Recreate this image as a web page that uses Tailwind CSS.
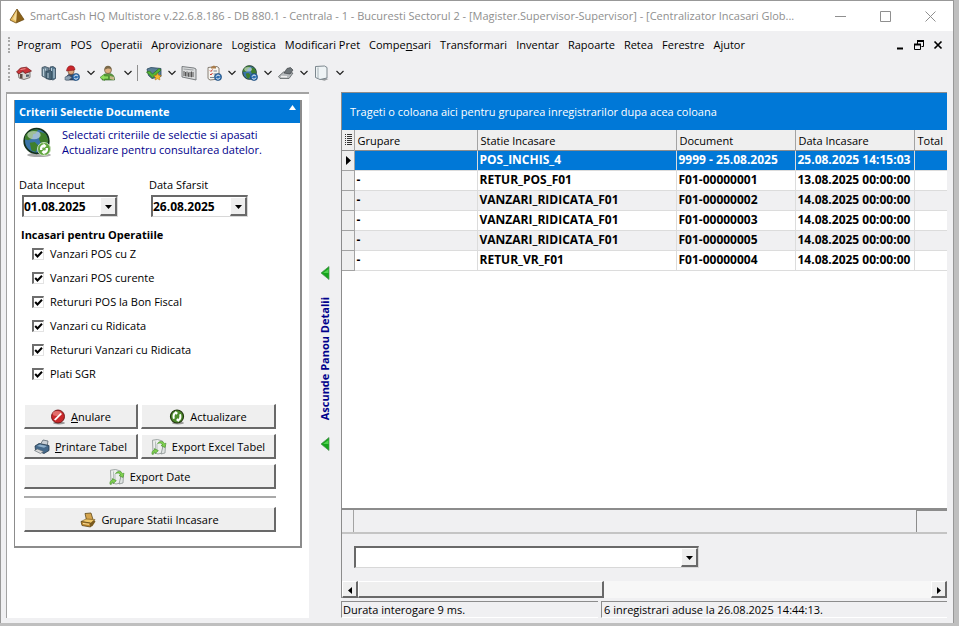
<!DOCTYPE html>
<html lang="ro">
<head>
  <meta charset="UTF-8" />
  <meta name="viewport" content="width=device-width, initial-scale=1.0"/>
  <title>SmartCash HQ Multistore</title>
  <script src="https://cdn.jsdelivr.net/npm/@tailwindcss/browser@4"></script>
  <style>
    body {
      font-family: 'Open Sans', 'Noto Sans', sans-serif;
    }
    .btn {
      display: flex;
      align-items: center;
      justify-content: center;
      gap: 5px;
      height: 25px;
      padding-top: 2px;
      background: #efefef;
      border: 1px solid #fff;
      border-right: 2px solid #696969;
      border-bottom: 2px solid #696969;
    }
    .btn:active {
      border-color: #696969 #fff #fff #696969;
    }
    .sunken {
      border: 2px solid #696969;
      border-right: 1px solid #d8d8d8;
      border-bottom: 1px solid #d8d8d8;
      background: #fff;
    }
    .check {
      appearance: none;
      width: 12px;
      height: 12px;
      border: 2px solid #6e6e6e;
      border-right: 1px solid #e3e3e3;
      border-bottom: 1px solid #e3e3e3;
      background: #fff;
    }
    .check:checked {
      background: #fff url("data:image/svg+xml,%3Csvg xmlns='http://www.w3.org/2000/svg' viewBox='0 0 9 9'%3E%3Cpath d='M1.2 4l2.3 2.5L8 1.8' fill='none' stroke='%23000' stroke-width='2'/%3E%3C/svg%3E") center / 9px 9px no-repeat;
    }
  </style>
</head>
<body class="bg-[#bfbfbf] text-black text-[11px] leading-4">

  <!-- Shared icons -->
  <svg class="hidden">
    <symbol id="chevron" viewBox="0 0 8 6"><path d="M.5 1L4 4.500 7.500 1" fill="none" stroke="#222" stroke-width="1.200"/></symbol>
    <symbol id="badge" viewBox="0 0 8 8"><circle cx="4" cy="4" r="3.6" fill="#2f6fb0" stroke="#1d4672" stroke-width=".6"/><path d="M2.2 3.6a2 2 0 0 1 3.6-.6M5.9 4.6a2 2 0 0 1-3.6.6" fill="none" stroke="#fff"/></symbol>
    <symbol id="export" viewBox="0 0 16 16">
      <path d="M1.500 1.200l5-.7 5 1.500v12L7 15l-5-1.500z" fill="#eceeee" stroke="#8b9492" stroke-width=".8"/>
      <path d="M4.500 2.500v10M6 5v8" stroke="#b7bfbd" fill="none"/>
      <path d="M12 7l2.500-.5-.5 7.500-4 1z" fill="#dfe3e2" stroke="#7f8886" stroke-width=".7"/>
      <path d="M6.500 4.500c2-3 6-2.500 7 .2l1.500-.5-1 4.300-4-2 1.500-.8c-1-1.700-2.500-2-5-1.200z" fill="#7fd04f" stroke="#3f8f25" stroke-width=".6"/>
      <path d="M1 15.300c-.5-2 .6-4 2.500-4.300L3.300 9.600l4 2-3 3-.3-1.500c-1 .2-1.800 1-1.600 2.200z" fill="#7fd04f" stroke="#3f8f25" stroke-width=".6"/>
    </symbol>
    <symbol id="globe" viewBox="0 0 16 16">
      <circle cx="8" cy="8" r="7.300" fill="#3a74a8" stroke="#14301c" stroke-width="1"/>
      <path d="M1.500 4.500C4 1.500 6.500.900 9 1.200L7.500 3.500 6 4l-.5 2.500L3 7.500 1 7zM4 9l3-.4 2 2-1.500 3.900-2.500-.8zM10 2.500l3.500 1.200 1.500 4-1.500 3.800-2.500-1.300L9.500 7z" fill="#3f7f2c"/>
      <ellipse cx="6.500" cy="4.500" rx="4" ry="2.500" fill="#fff" opacity=".5"/>
    </symbol>
    <symbol id="arrow-left" viewBox="0 0 10 14"><path d="M1 7l8-6.500v13z" fill="#16a51c" stroke="#4b8f50" stroke-width=".7"/><path d="M3 7l5.500-4v4z" fill="#4fd04f"/></symbol>
  </svg>

  <div class="min-h-screen flex flex-col pr-[5px] pb-[3px]">
    <div class="flex-1 flex flex-col min-w-0 bg-[#f0f0f2] border-t border-l border-r border-[#989898]">

      <!-- Title bar -->
      <header class="flex items-center h-[30px] bg-white text-[#8f8f8f] pl-2 pr-[17px]">
        <svg class="w-4 h-4 mr-[5px] shrink-0" viewBox="0 0 16 16"><path d="M8 1L1 12l6 3z" fill="#e8bd5f"/><path d="M8 1L7 15l8-3.500z" fill="#8c6218"/><path d="M8 1L1 12l6 3 8-3.500z" fill="none" stroke="#6d4a12" stroke-width=".8"/><path d="M7.500 3L4 11l3 2z" fill="#f6dc96"/></svg>
        <h1 class="flex-1 min-w-0 whitespace-nowrap">SmartCash HQ Multistore v.22.6.8.186 - DB 880.1 - Centrala - 1 - Bucuresti Sectorul 2 - [Magister.Supervisor-Supervisor] - [Centralizator Incasari Glob...</h1>
        <div class="flex items-center gap-[34px] shrink-0">
          <button aria-label="Minimizare"><svg class="w-[11px] h-[11px]" viewBox="0 0 11 11"><path d="M0 5.500h11" stroke="#8f8f8f"/></svg></button>
          <button aria-label="Maximizare"><svg class="w-[11px] h-[11px]" viewBox="0 0 11 11"><path d="M.5.5h10v10H.5z" fill="none" stroke="#8f8f8f"/></svg></button>
          <button aria-label="Inchidere"><svg class="w-[11px] h-[11px]" viewBox="0 0 11 11"><path d="M.5.5l10 10M10.500.5l-10 10" stroke="#8f8f8f"/></svg></button>
        </div>
      </header>

      <!-- Menu bar -->
      <nav class="flex items-center h-7 pl-[7px] pr-[10px]">
        <span class="h-4 border-l-2 border-dotted border-[#a8a8a8]"></span>
        <div class="flex-1 flex gap-[9px] pl-[7px] whitespace-nowrap">
          <a href="#">Program</a>
          <a href="#">POS</a>
          <a href="#">Operatii</a>
          <a href="#">Aprovizionare</a>
          <a href="#">Logistica</a>
          <a href="#">Modificari Pret</a>
          <a href="#">Compe<u>n</u>sari</a>
          <a href="#">Transformari</a>
          <a href="#">Inventar</a>
          <a href="#">Rapoarte</a>
          <a href="#">Retea</a>
          <a href="#">Ferestre</a>
          <a href="#">Ajutor</a>
        </div>
        <div class="flex items-center gap-[9px]">
          <button aria-label="Minimizare fereastra"><svg class="w-[10px] h-[10px]" viewBox="0 0 10 10"><path d="M2 8.500h6" stroke="#000" stroke-width="2"/></svg></button>
          <button aria-label="Restaurare fereastra"><svg class="w-[10px] h-[10px]" viewBox="0 0 10 10"><path d="M3 1.500h6.500M9.500 1v5.500H7.500M3.500 1v3M.5 4v5.500h6V4" fill="none" stroke="#000"/><path d="M3 1h7M0 4.500h7" stroke="#000" stroke-width="2"/></svg></button>
          <button aria-label="Inchidere fereastra"><svg class="w-[10px] h-[10px]" viewBox="0 0 10 10"><path d="M1.500 1.500l7 7M8.500 1.500l-7 7" stroke="#000" stroke-width="1.700"/></svg></button>
        </div>
      </nav>

      <!-- Toolbar -->
      <div class="flex items-center h-7 pl-[7px] mb-[5px]">
        <span class="h-4 border-l-2 border-dotted border-[#a8a8a8]"></span>
        <button class="ml-[6px]" aria-label="Acasa"><svg class="w-4 h-4" viewBox="0 0 16 16"><path d="M2 7l1 6 5 1.500 6-2V7z" fill="#d9d6d1" stroke="#66605a" stroke-width=".8"/><path d="M.5 7L4.500 3l6-.8L15.500 6 9 8.500 7 6 3 9z" fill="#c93236" stroke="#6c1215" stroke-width=".7"/><path d="M4.500 4.500l5-.8" stroke="#ee9a98"/><path d="M4 9h2.500v4.800L4 13z" fill="#5d4a42"/><path d="M10 9.500h3v2l-3 .6z" fill="#54606b"/></svg></button>
        <button class="ml-[9px]" aria-label="Cladiri"><svg class="w-4 h-4" viewBox="0 0 16 16"><path d="M1 2.500l3-1 4 1.500v9l-3 1-4-2z" fill="#6e8797" stroke="#3d5160" stroke-width=".8"/><path d="M9 2l3-.5 2.500 1.500v10.500L12 15l-3-1z" fill="#577990" stroke="#33485a" stroke-width=".8"/><path d="M5 6.500l4-1 2 1V14l-2 .8L5 13.500z" fill="#486477" stroke="#2d4251" stroke-width=".7"/><path d="M2.500 4v7M4.500 3.500v2M7 8v5M10.500 3v3M13 4v9" stroke="#c6d8e2" stroke-width=".9"/></svg></button>
        <button class="ml-[7px]" aria-label="Operator"><svg class="w-4 h-4" viewBox="0 0 16 16"><path d="M2 15c0-4 2-6 5-6s5 2 5 6z" fill="#35486a" stroke="#1f2f46" stroke-width=".6"/><path d="M1 12l4-1.500 3 2L5 15H1z" fill="#8fa3b5" stroke="#3d5160" stroke-width=".5"/><circle cx="7" cy="6.500" r="3" fill="#d9a47b" stroke="#5d3a23" stroke-width=".6"/><path d="M2.500 6C3 2 5 .8 7 .8c2.500 0 4 1.500 4 4.200z" fill="#c8262b" stroke="#781317" stroke-width=".5"/><use href="#badge" x="8" y="8" width="8" height="8"/></svg></button>
        <button class="ml-[7px]" aria-label="Optiuni operator"><svg class="w-2 h-[6px]"><use href="#chevron"/></svg></button>
        <button class="ml-[5px]" aria-label="Client"><svg class="w-4 h-4" viewBox="0 0 16 16"><path d="M2 15c0-4 2-6.500 6-6.500s6.500 1.500 6.500 6.500z" fill="#5d9a3f" stroke="#2a5f20" stroke-width=".6"/><circle cx="8" cy="5" r="3.500" fill="#dcae80" stroke="#5d4a33" stroke-width=".6"/><path d="M4.600 5C4.500 2 6 .8 8 .8S11.500 2 11.400 4.500C9.500 3 7 3 4.600 5z" fill="#7a6a4a"/><path d="M0 12.500L4.500 9v2h4v3h-4v1.500z" fill="#8ddc5c" stroke="#3a7f22" stroke-width=".6"/><path d="M10 11l4 1v3l-4-1z" fill="#c6b988"/></svg></button>
        <button class="ml-2" aria-label="Optiuni client"><svg class="w-2 h-[6px]"><use href="#chevron"/></svg></button>
        <span class="h-4 ml-[5px] border-l border-[#8f8f8f]"></span>
        <button class="ml-2" aria-label="Validare"><svg class="w-4 h-4" viewBox="0 0 16 16"><path d="M1 4l4-1.500 10 1v8l-9 2-3.500-3z" fill="#5a7f97" stroke="#29485f" stroke-width=".8"/><path d="M.5 7L3.500 6l3 3L13 3.500 15 5l-8.500 8z" fill="#55b53a" stroke="#2b6d1b" stroke-width=".7"/><path d="M11.500 8l1.200 2.300 2.600.3-1.800 1.800.4 2.600-2.400-1.200L9 15l.5-2.600-1.800-1.800 2.600-.3z" fill="#f7b731" stroke="#a86c0a" stroke-width=".5"/></svg></button>
        <button class="ml-[6px]" aria-label="Optiuni validare"><svg class="w-2 h-[6px]"><use href="#chevron"/></svg></button>
        <button class="ml-[5px]" aria-label="Cod de bare"><svg class="w-4 h-4" viewBox="0 0 16 16"><path d="M1 1.500l12 1.500 2 1v11l-2-.5L1 12z" fill="#d9dbdc" stroke="#6d7275" stroke-width=".9"/><path d="M3 6v5M4.500 7v4.300M6 6.500v5M7.500 7.500v4.300M9 7v5M10.500 6.500v5.700M12 7v5" stroke="#555"/><path d="M2.500 4l10 1" stroke="#9b9fa2"/></svg></button>
        <button class="ml-[9px]" aria-label="Document"><svg class="w-4 h-4" viewBox="0 0 16 16"><path d="M2 2.500l9-1 2 1.500v11L4 15l-2-1.500z" fill="#f6f4ef" stroke="#7c7368" stroke-width=".9"/><path d="M5 2l3-1.500L10 2v1.500H5z" fill="#a97c4b"/><path d="M4 5.500l1 1 1.500-2M4 9l1 1 1.500-2" stroke="#c8372c" fill="none"/><path d="M7.500 6H11M7.500 9H10M4 12.500h4" stroke="#7b8791"/><use href="#badge" x="8" y="8" width="8" height="8"/></svg></button>
        <button class="ml-[6px]" aria-label="Optiuni document"><svg class="w-2 h-[6px]"><use href="#chevron"/></svg></button>
        <button class="ml-[6px]" aria-label="Internet"><svg class="w-4 h-4" viewBox="0 0 16 16"><use href="#globe" width="15" height="15"/><use href="#badge" x="8" y="8" width="8" height="8"/></svg></button>
        <button class="ml-[6px]" aria-label="Optiuni internet"><svg class="w-2 h-[6px]"><use href="#chevron"/></svg></button>
        <button class="ml-[6px]" aria-label="Stampila"><svg class="w-4 h-4" viewBox="0 0 16 16"><path d="M.5 11.500l5-4.500 9.500 1-4 5.500L2 13.500z" fill="#b5b9bc" stroke="#5b5f62" stroke-width=".8"/><path d="M6 8l3-4.500 3.500-1L15 5l-3 4z" fill="#6d7478" stroke="#34383a" stroke-width=".6"/><path d="M3 11.500l6 .3" stroke="#eee" stroke-width="1.500"/></svg></button>
        <button class="ml-[6px]" aria-label="Optiuni stampila"><svg class="w-2 h-[6px]"><use href="#chevron"/></svg></button>
        <button class="ml-[6px]" aria-label="Pagina"><svg class="w-4 h-4" viewBox="0 0 16 16"><path d="M10 13l4.500 1-4 1.700L6 14.500z" fill="#989c9e"/><path d="M1.500 1.500l9-.5L13 2.500V13l-7 1.500-4.500-2z" fill="#eef3f5" stroke="#6e7b82" stroke-width=".9"/><path d="M4 2.500v10.500" stroke="#a9b4b9"/></svg></button>
        <button class="ml-[6px]" aria-label="Optiuni pagina"><svg class="w-2 h-[6px]"><use href="#chevron"/></svg></button>
      </div>

      <main class="flex-1 flex min-w-0 pl-[5px] pr-[6px] pb-[5px]">

        <!-- Selection criteria -->
        <aside class="w-[303px] shrink-0 bg-white border-t-2 border-l border-[#a3a3a3] pt-[6px] px-[7px]">
          <section class="border-r-2 border-b-2 border-l border-[#8c8c8c]">
            <button class="flex w-full h-[23px] items-center justify-between bg-[#0078d7] text-white font-bold px-1">
              <span>Criterii Selectie Documente</span>
              <svg class="w-[7px] h-[5px] mb-2" viewBox="0 0 7 5"><path d="M0 5l3.500-5L7 5z" fill="#fff"/></svg>
            </button>

            <div class="flex gap-[9px] pt-1 pl-2 h-[54px] text-[#00008b]">
              <svg class="w-[30px] h-[32px] shrink-0" viewBox="0 0 30 32">
                <ellipse cx="16" cy="28" rx="12" ry="2" fill="#aaa"/>
                <use href="#globe" x="0" y="0" width="27" height="28"/>
                <circle cx="21" cy="22" r="6.500" fill="#5ea53a" stroke="#c9dfbd"/>
                <path d="M17 23c-.5-4 2-5.500 3.500-5.500v-1.500l3 3-3 2.500v-1.500c-1 .3-1.500 1.500-1 3zM25 21c.5 4-2 5.500-3.500 5.500v1.500l-3-3 3-2.500V24c1-.3 1.500-1.500 1-3z" fill="#fff"/>
              </svg>
              <p class="leading-[15px]">Selectati criteriile de selectie si apasati<br>Actualizare pentru consultarea datelor.</p>
            </div>

            <div class="flex gap-[31px] pl-1 pb-[9px]">
              <div class="w-[99px]">
                <label for="start" class="block">Data Inceput</label>
                <div class="sunken flex h-[22px] ml-[3px] mt-[2px] text-[12px]">
                  <input id="start" value="01.08.2025" class="flex-1 min-w-0 font-bold outline-none">
                  <button aria-label="Alege data inceput" class="btn w-[17px] !h-[19px] shrink-0"><svg class="w-[7px] h-1 shrink-0" viewBox="0 0 7 4"><path d="M0 0h7L3.500 4z"/></svg></button>
                </div>
              </div>
              <div class="w-[99px]">
                <label for="end" class="block">Data Sfarsit</label>
                <div class="sunken flex h-[22px] ml-[2px] mt-[2px] text-[12px]">
                  <input id="end" value="26.08.2025" class="flex-1 min-w-0 font-bold outline-none">
                  <button aria-label="Alege data sfarsit" class="btn w-[17px] !h-[19px] shrink-0"><svg class="w-[7px] h-1 shrink-0" viewBox="0 0 7 4"><path d="M0 0h7L3.500 4z"/></svg></button>
                </div>
              </div>
            </div>

            <fieldset class="pl-[6px]">
              <legend class="font-bold h-5 pt-px">Incasari pentru Operatiile</legend>
              <div class="flex flex-col gap-2 pl-[11px]">
                <label class="flex items-center gap-[6px]"><input type="checkbox" checked class="check">Vanzari POS cu Z</label>
                <label class="flex items-center gap-[6px]"><input type="checkbox" checked class="check">Vanzari POS curente</label>
                <label class="flex items-center gap-[6px]"><input type="checkbox" checked class="check">Retururi POS la Bon Fiscal</label>
                <label class="flex items-center gap-[6px]"><input type="checkbox" checked class="check">Vanzari cu Ridicata</label>
                <label class="flex items-center gap-[6px]"><input type="checkbox" checked class="check">Retururi Vanzari cu Ridicata</label>
                <label class="flex items-center gap-[6px]"><input type="checkbox" checked class="check">Plati SGR</label>
              </div>
            </fieldset>

            <!-- Actions -->
            <div class="grid grid-cols-[114px_1fr] gap-x-[3px] gap-y-[5px] pt-[22px] pl-[9px] pr-6 pb-[14px]">
              <button class="btn"><svg class="w-4 h-4" viewBox="0 0 16 16"><ellipse cx="9" cy="14" rx="6" ry="1.500" fill="#999"/><circle cx="8" cy="7.500" r="6.500" fill="#c9292b" stroke="#6d1213" stroke-width=".9"/><ellipse cx="7" cy="4.500" rx="4.500" ry="2.500" fill="#ee8a86" opacity=".7"/><path d="M4 10.500l6.500-6.500 1.500 1L5.500 11.500z" fill="#fff"/></svg><span><u>A</u>nulare</span></button>
              <button class="btn"><svg class="w-4 h-4" viewBox="0 0 16 16"><ellipse cx="9" cy="14" rx="6" ry="1.500" fill="#999"/><circle cx="8" cy="7.500" r="6.500" fill="#4d8c2c" stroke="#23380f" stroke-width="1.200"/><path d="M4 10c-1-4 0-6.500 2.300-7V1.800L9 4 7 6V4.800C5.800 5.500 5.200 7 5.800 9.500zM12 5c1 4 0 6.500-2.300 7v1.200L7 11l2-2v1.200c1.200-.7 1.800-2.200 1.200-4.700z" fill="#fff"/></svg>Actualizare</button>
              <button class="btn"><svg class="w-4 h-4" viewBox="0 0 16 16"><path d="M6 6l3-5 5 1-1 6z" fill="#c9d0d6" stroke="#5b6770" stroke-width=".8"/><path d="M1 7l4-2.500 10 2v5L10 14.500 1.500 11z" fill="#43688a" stroke="#23384b" stroke-width=".8"/><path d="M3 7l3-1.500 7 1.500-3 1.800z" fill="#8fb0cb"/><path d="M.5 11.500l3-1.500 6 2.500-3 2z" fill="#d8d8d8" stroke="#5c6870" stroke-width=".6"/></svg><span><u>P</u>rintare Tabel</span></button>
              <button class="btn"><svg class="w-4 h-4"><use href="#export"/></svg>Export Excel Tabel</button>
              <button class="btn col-span-2"><svg class="w-4 h-4"><use href="#export"/></svg>Export Date</button>
              <hr class="col-span-2 border-t-2 border-[#a9a9a9] mt-[2px] mb-1">
              <button class="btn col-span-2"><svg class="w-4 h-4" viewBox="0 0 16 16"><path d="M5 1.500L11 1l2 6.500-6.500.5z" fill="#d5a54e" stroke="#604a1a" stroke-width=".8"/><path d="M1 9.500L6 7l9 .5-4 4z" fill="#f0c869" stroke="#70501a" stroke-width=".6"/><path d="M1 9.500l9.500 1.500v4L2 13.500z" fill="#c18a2c" stroke="#604a1a" stroke-width=".8"/><path d="M10.500 11L14 8l1.500 1.500-3 4.500-2 1z" fill="#7a5a1d"/><path d="M3 11.500l6 .8" stroke="#f8dfa0"/></svg>Grupare Statii Incasare</button>
            </div>
          </section>
        </aside>

        <!-- Splitter -->
        <button class="w-8 shrink-0 flex flex-col items-center justify-center pt-[7px] gap-[17px] text-[#00008b] font-bold">
          <svg class="w-[10px] h-[14px]"><use href="#arrow-left"/></svg>
          <span class="[writing-mode:vertical-rl] rotate-180 whitespace-nowrap">Ascunde Panou Detalii</span>
          <svg class="w-[10px] h-[14px]"><use href="#arrow-left"/></svg>
        </button>

        <!-- Results -->
        <section class="flex-1 min-w-0 flex flex-col">
          <div class="flex-1 flex flex-col min-w-0 border-l border-t border-[#8c8c8c]">
            <div class="flex items-center h-[37px] pl-2 pt-px bg-[#0078d7] text-white shrink-0">Trageti o coloana aici pentru gruparea inregistrarilor dupa acea coloana</div>
            <div class="flex-1 bg-white overflow-hidden">
              <table class="w-full table-fixed border-collapse whitespace-nowrap">
                <colgroup><col class="w-3"><col class="w-[123px]"><col class="w-[199px]"><col class="w-[119px]"><col class="w-[119px]"><col></colgroup>
                <thead>
                  <tr class="h-5 bg-[#efefef] border-b border-[#8c8c8c] text-left">
                    <th class="border-r border-[#a3a3a3]" aria-label="Coloane"><svg class="w-[7px] h-[11px] ml-[3px]" viewBox="0 0 7 11"><path d="M0 .5h1M2 .5h5M0 2.500h1M2 2.500h5M0 4.500h1M2 4.500h5M0 6.500h1M2 6.500h5M0 8.500h1M2 8.500h5M0 10.500h1M2 10.500h5" stroke="#333"/></svg></th>
                    <th class="font-normal pl-[3px] pt-[2px] border-r border-[#a3a3a3]">Grupare</th>
                    <th class="font-normal pl-[3px] pt-[2px] border-r border-[#a3a3a3]">Statie Incasare</th>
                    <th class="font-normal pl-[3px] pt-[2px] border-r border-[#a3a3a3]">Document</th>
                    <th class="font-normal pl-[3px] pt-[2px] border-r border-[#a3a3a3]">Data Incasare</th>
                    <th class="font-normal pl-[3px] pt-[2px]">Total</th>
                  </tr>
                </thead>
                <tbody id="rows" class="font-bold text-[12px]"></tbody>
              </table>
            </div>
            <div class="flex h-[26px] shrink-0 border-t-2 border-b-2 border-t-[#8c8c8c] border-b-[#c4c4c4]">
              <span class="w-3 border-r border-[#a3a3a3]"></span>
              <span class="flex-1"></span>
              <span class="w-[31px] border-l border-t border-[#8c8c8c]"></span>
            </div>
            <div class="pt-3 pl-3 pb-[13px] shrink-0">
              <div class="sunken flex w-[345px] h-[22px]">
                <select aria-label="Filtru" class="appearance-none flex-1 px-1 outline-none"><option></option></select>
                <span class="btn w-[17px] !h-[19px] pointer-events-none"><svg class="w-[7px] h-1 shrink-0" viewBox="0 0 7 4"><path d="M0 0h7L3.500 4z"/></svg></span>
              </div>
            </div>
            <div class="flex h-[17px] shrink-0 bg-[#f7f7f7]">
              <button class="btn w-4 !h-[17px]" aria-label="Stanga"><svg class="w-1 h-[7px]" viewBox="0 0 4 7"><path d="M4 0v7L0 3.500z"/></svg></button>
              <span class="btn w-[246px] !h-[17px]"></span>
              <span class="flex-1"></span>
              <button class="btn w-4 !h-[17px]" aria-label="Dreapta"><svg class="w-1 h-[7px]" viewBox="0 0 4 7"><path d="M0 0v7l4-3.500z"/></svg></button>
            </div>
          </div>
          <footer class="flex gap-[3px] mt-[3px] shrink-0 whitespace-nowrap">
            <span class="w-[257px] h-[17px] pl-px border-t border-l border-[#8c8c8c] border-b border-b-white">Durata interogare 9 ms.</span>
            <span class="flex-1 h-[17px] pl-[2px] border-t border-l border-[#8c8c8c] border-b border-b-white">6 inregistrari aduse la 26.08.2025 14:44:13.</span>
          </footer>
        </section>
      </main>
    </div>
  </div>

  <script>
    const rows = [
      ['', 'POS_INCHIS_4', '9999 - 25.08.2025', '25.08.2025 14:15:03'],
      ['-', 'RETUR_POS_F01', 'F01-00000001', '13.08.2025 00:00:00'],
      ['-', 'VANZARI_RIDICATA_F01', 'F01-00000002', '14.08.2025 00:00:00'],
      ['-', 'VANZARI_RIDICATA_F01', 'F01-00000003', '14.08.2025 00:00:00'],
      ['-', 'VANZARI_RIDICATA_F01', 'F01-00000005', '14.08.2025 00:00:00'],
      ['-', 'RETUR_VR_F01', 'F01-00000004', '14.08.2025 00:00:00'],
    ];
    const marker = '<svg class="w-[5px] h-[9px] ml-1" viewBox="0 0 5 9"><path d="M0 0v9l5-4.500z"/></svg>';

    document.getElementById('rows').innerHTML = rows.map((row, i) => {
      let color = i % 2 ? 'bg-white' : 'bg-[#f0f0f2]';
      if (i === 0) color = 'bg-[#0078d7] text-white';
      const cells = row.map(text => `<td class="pl-[2px] border-r border-b border-[#dcdcdc]">${text}</td>`).join('');
      return `<tr class="h-5 ${color}"><td class="bg-[#efefef] border-r border-b border-[#a3a3a3]">${i === 0 ? marker : ''}</td>${cells}<td class="border-b border-[#dcdcdc]"></td></tr>`;
    }).join('');
  </script>
</body>
</html>
